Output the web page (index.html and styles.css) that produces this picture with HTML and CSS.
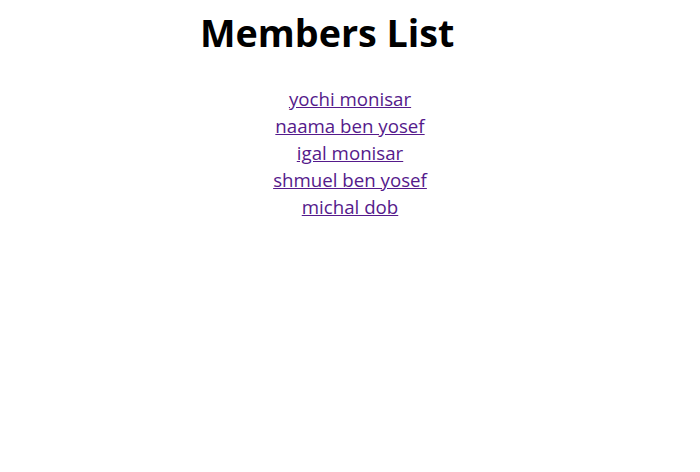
FILE: index.html
```html
<!DOCTYPE html>
<html>
<head>
<meta charset="utf-8">
<link rel="stylesheet" href="styles.css">
</head>
<body>
<div class="page">
  <h1 class="title">Members List</h1>
  <ul class="members">
    <li><a href="#a">yochi monisar</a></li>
    <li><a href="#b">naama ben yosef</a></li>
    <li><a href="#c">igal monisar</a></li>
    <li><a href="#d">shmuel ben yosef</a></li>
    <li><a href="#e">michal dob</a></li>
  </ul>
</div>
</body>
</html>
```
FILE: styles.css
```css
body {
  margin: 0;
  font-family: "Open Sans", "Noto Sans", sans-serif;
  background: #fff;
}
.page {
  display: flex;
  flex-direction: column;
}
.title {
  margin: 8px 0 0 200px;
  font-size: 37.7px;
  font-weight: 700;
  line-height: 50px;
  color: #000;
}
.members {
  list-style: none;
  margin: 27px 0 0;
  padding: 0;
  text-align: center;
}
.members li {
  line-height: 27px;
  font-size: 18.7px;
}
.members a {
  color: #551a8b;
}
```
